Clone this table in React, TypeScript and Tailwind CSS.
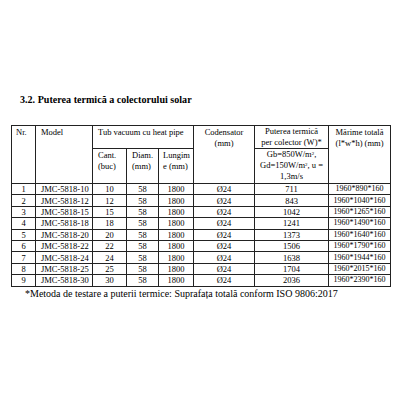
const rows = [
  ["1", "JMC-5818-10", "10", "711", "1960*890*160"],
  ["2", "JMC-5818-12", "12", "843", "1960*1040*160"],
  ["3", "JMC-5818-15", "15", "1042", "1960*1265*160"],
  ["4", "JMC-5818-18", "18", "1241", "1960*1490*160"],
  ["5", "JMC-5818-20", "20", "1373", "1960*1640*160"],
  ["6", "JMC-5818-22", "22", "1506", "1960*1790*160"],
  ["7", "JMC-5818-24", "24", "1638", "1960*1944*160"],
  ["8", "JMC-5818-25", "25", "1704", "1960*2015*160"],
  ["9", "JMC-5818-30", "30", "2036", "1960*2390*160"],
];

const cell = "border border-[#222] p-0";

export default function App() {
  return (
    <div className="w-[400px] h-[400px] bg-white text-black font-['Liberation_Serif',serif] overflow-hidden">
      <div className="pt-[94px] pl-[20px] text-[10.1px] leading-[12px] font-bold">
        3.2. Puterea termică a colectorului solar
      </div>

      <table className="mt-[19px] ml-[11px] w-[379px] table-fixed border-collapse text-[8.5px] leading-[11px]">
        <colgroup>
          <col className="w-[24px]" />
          <col className="w-[57px]" />
          <col className="w-[34px]" />
          <col className="w-[32px]" />
          <col className="w-[35px]" />
          <col className="w-[61px]" />
          <col className="w-[74px]" />
          <col className="w-[62px]" />
        </colgroup>
        <thead>
          <tr className="h-[22px] align-top">
            <th rowSpan={2} className={`${cell} font-normal text-left pl-[4px] pt-[1px]`}>Nr.</th>
            <th rowSpan={2} className={`${cell} font-normal text-left pl-[5px] pt-[1px]`}>Model</th>
            <th colSpan={3} className={`${cell} font-normal text-left pl-[5px] pt-[1px]`}>
              Tub vacuum cu heat pipe
            </th>
            <th rowSpan={2} className={`${cell} font-normal text-center pt-[1px]`}>
              Codensator
              <br />
              (mm)
            </th>
            <th className={`${cell} font-normal text-center pt-[0px]`}>
              Puterea termică
              <br />
              per colector (W)*
            </th>
            <th rowSpan={2} className={`${cell} font-normal text-center pt-[1px]`}>
              Mărime totală
              <br />
              (l*w*h) (mm)
            </th>
          </tr>
          <tr className="h-[35px] align-top">
            <th className={`${cell} font-normal text-left pl-[5px] pt-[1px]`}>
              Cant.
              <br />
              (buc)
            </th>
            <th className={`${cell} font-normal text-left pl-[5px] pt-[1px]`}>
              Diam.
              <br />
              (mm)
            </th>
            <th className={`${cell} font-normal text-left pl-[4px] pt-[1px]`}>
              Lungim
              <br />e (mm)
            </th>
            <th className={`${cell} font-normal text-center`}>
              Gb=850W/m<sup className="text-[5px]">2</sup>,
              <br />
              Gd=150W/m<sup className="text-[5px]">2</sup>, u =
              <br />
              1,3m/s
            </th>
          </tr>
        </thead>
        <tbody className="leading-[10px]">
          {rows.map((r) => (
            <tr key={r[0]} className="h-[11.4px]">
              <td className={`${cell} text-center`}>{r[0]}</td>
              <td className={`${cell} text-left pl-[5px]`}>{r[1]}</td>
              <td className={`${cell} text-center`}>{r[2]}</td>
              <td className={`${cell} text-center`}>58</td>
              <td className={`${cell} text-center`}>1800</td>
              <td className={`${cell} text-center`}>Ø24</td>
              <td className={`${cell} text-center`}>{r[3]}</td>
              <td className={`${cell} text-center text-[8px]`}>{r[4]}</td>
            </tr>
          ))}
        </tbody>
      </table>

      <div className="pl-[25px] pt-[1px] text-[10px] leading-[12px]">
        *Metoda de testare a puterii termice: Suprafața totală conform ISO 9806:2017
      </div>
    </div>
  );
}
